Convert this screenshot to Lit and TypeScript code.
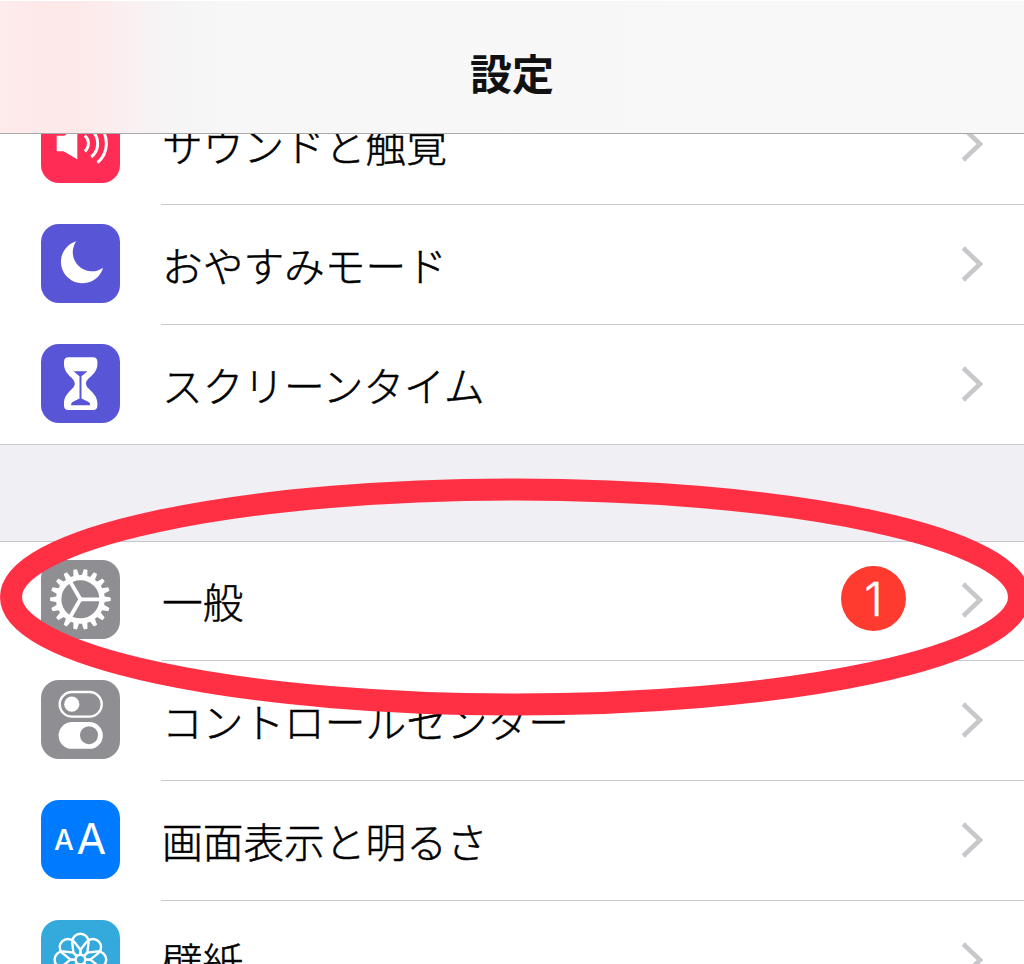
import { LitElement, html, svg, css } from "lit";
import { customElement, property } from "lit/decorators.js";

const teeth = Array.from({ length: 18 }, (_, i) => i * 20 + 10);
const petals = Array.from({ length: 8 }, (_, i) => i * 45);

const glyphs: Record<string, unknown> = {
  sound: svg`
    <path fill="#fff" d="M15.7 31.7H23L36.3 23.7V55.3L22.5 47.2H15.7Z"/>
    <g fill="none" stroke="#fff" stroke-width="3">
      <path d="M43.8 31.6A10.5 10.5 0 0 1 43.8 47.4"/>
      <path d="M50.3 26A17.5 17.5 0 0 1 50.3 53"/>
      <path d="M56.5 20.4A25 25 0 0 1 56.5 58.6"/>
    </g>`,
  moon: svg`<path fill="#fff" d="M35.3 17.2A21.5 21.5 0 1 0 62.1 43.7A19.1 19.1 0 0 1 35.3 17.2Z"/>`,
  hourglass: svg`
    <path fill="#fff" d="M27.5 13.3H52Q56.4 13.3 56.4 17.8V20C56.4 31 45 33.5 45 39.6C45 45.7 56.4 48.5 56.4 59.5V61.5Q56.4 66 52 66H27.5Q23 66 23 61.5V59.5C23 48.5 33.8 45.7 33.8 39.6C33.8 33.5 23 31 23 20V17.8Q23 13.3 27.5 13.3Z"/>
    <path fill="#5856d6" d="M32.5 27.3H46.5L40.5 32.3V54.6L47.6 58Q49.2 59 49.2 61.3H30Q30 59 31.6 58L38.5 54.6V32.3Z"/>`,
  gear: svg`
    <g transform="translate(39.4 39.3)" fill="#fff">
      ${teeth.map((a) => svg`<path transform="rotate(${a})" d="M-3 -23L-1.8 -30.3H1.8L3 -23Z"/>`)}
      <circle r="21.7" fill="none" stroke="#fff" stroke-width="5.4"/>
      ${[90, 210, 330].map((a) => svg`<path transform="rotate(${a})" d="M-1.9 0V-21H1.9V0Z"/>`)}
      <circle r="2.4"/>
    </g>`,
  toggles: svg`
    <rect x="18.7" y="12" width="42" height="24.6" rx="12.3" fill="none" stroke="#fff" stroke-width="2.4"/>
    <circle cx="30.8" cy="24.2" r="7.6" fill="#fff"/>
    <rect x="17.6" y="42" width="44.2" height="26.8" rx="13.4" fill="#fff"/>
    <circle cx="48" cy="55.2" r="9" fill="#8e8e93"/>`,
  text: svg`
    <text x="13" y="50.3" font-size="28" font-weight="500" fill="#fff" font-family="Inter">A</text>
    <text x="35.4" y="53.8" font-size="43" fill="#fff" font-family="Inter">A</text>`,
  flower: svg`
    <g transform="translate(39.4 39.6)" fill="none" stroke="#fff" stroke-width="2.4">
      ${petals.map((a) => svg`<path transform="rotate(${a})" d="M-3.5 -3.5L-7 -7L-8.2 -17.6A8.2 8.2 0 1 1 8.2 -17.6L7 -7L3.5 -3.5"/>`)}
      <circle r="4.8"/>
    </g>`,
};

@customElement("settings-row")
class SettingsRow extends LitElement {
  @property() icon = "";
  @property() label = "";
  @property() color = "";
  @property() badge = "";

  static styles = css`
    :host { display: flex; height: 120px; box-sizing: border-box; padding-left: 41px; background: #fff; }
    .tile { width: 79px; height: 79px; margin: 19px 41px 0 0; border-radius: 18px; display: block; flex: none; }
    .body { flex: 1; display: flex; align-items: center; border-bottom: 1px solid #c8c7cc; padding-right: 40px; }
    :host([last]) .body { border-bottom-color: transparent; }
    .label { flex: 1; font-size: 40.7px; font-weight: 300; -webkit-text-stroke: 0.5px #000; line-height: 60px; padding: 0 0 0 1px; color: #000; white-space: nowrap; }
    .badge { width: 65px; height: 65px; border-radius: 50%; background: #ff3b30; color: #fff; display: flex; align-items: center; justify-content: center; font: 300 47px/65px Inter, sans-serif; -webkit-text-stroke: 0.4px #fff; margin: 0 54px 5px 0; }
    .chevron { width: 24px; height: 38px; display: block; margin-bottom: 1px; }
  `;

  render() {
    return html`
      <svg class="tile" style="background:${this.color}" viewBox="0 0 79 79">${glyphs[this.icon]}</svg>
      <div class="body">
        <span class="label">${this.label}</span>
        ${this.badge ? html`<span class="badge">${this.badge}</span>` : null}
        <svg class="chevron" viewBox="0 0 24 38"><path d="M3.2 3L20 19L3.2 35" fill="none" stroke="#c7c7cc" stroke-width="4.6"/></svg>
      </div>`;
  }
}

@customElement("app-root")
class AppRoot extends LitElement {
  static styles = css`
    :host { display: flex; flex-direction: column; position: relative; width: 1024px; height: 964px; overflow: hidden; background: #fff; font-family: "Noto Sans CJK JP", sans-serif; }
    .header { flex: none; height: 134px; box-sizing: border-box; border-bottom: 1px solid #a9a9ac; border-top: 1px solid #fff; display: flex; justify-content: center; z-index: 1; position: relative;
      background: linear-gradient(90deg, #feebec 0, #fee8e8 70px, #fbeeef 115px, #f6f4f5 165px, #f7f7f8 230px, #f8f8f8 100%); }
    .title { margin: 0; font-size: 42px; line-height: 60px; padding-top: 41px; font-weight: 700; color: #111; }
    .list { flex: none; margin-top: -49px; }
    .gap { height: 98px; box-sizing: border-box; background: #efeff4; border-bottom: 1px solid #c8c7cc; border-top: 1px solid #c8c7cc; margin: -1px 0; position: relative; }
    .ring { position: absolute; left: 0; top: 0; width: 1024px; height: 964px; z-index: 2; pointer-events: none; }
  `;

  render() {
    return html`
      <header class="header"><h1 class="title">設定</h1></header>
      <main class="list">
        <settings-row icon="sound" color="#ff2d55" label="サウンドと触覚"></settings-row>
        <settings-row icon="moon" color="#5856d6" label="おやすみモード"></settings-row>
        <settings-row icon="hourglass" color="#5856d6" label="スクリーンタイム" last></settings-row>
        <div class="gap"></div>
        <settings-row icon="gear" color="#8e8e93" label="一般" badge="1"></settings-row>
        <settings-row icon="toggles" color="#8e8e93" label="コントロールセンター"></settings-row>
        <settings-row icon="text" color="#007aff" label="画面表示と明るさ"></settings-row>
        <settings-row icon="flower" color="#34aadc" label="壁紙"></settings-row>
      </main>
      <svg class="ring" viewBox="0 0 1024 964"><ellipse cx="515" cy="597" rx="504" ry="107.5" fill="none" stroke="#ff3044" stroke-width="22"/></svg>`;
  }
}
